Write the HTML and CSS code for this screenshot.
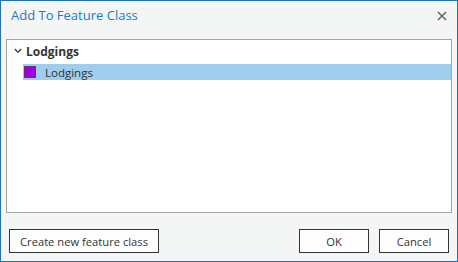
FILE: index.html
```html
<!DOCTYPE html>
<html>
<head>
<meta charset="utf-8">
<link rel="stylesheet" href="styles.css">
</head>
<body>
<div class="window">
  <div class="titlebar">
    <span class="title">Add To Feature Class</span>
    <span class="close" aria-label="Close">
      <svg width="10" height="10" viewBox="0 0 10 10"><path d="M1 1L9 9M9 1L1 9" stroke="#5f5f5f" stroke-width="1.4" fill="none"/></svg>
    </span>
  </div>
  <div class="listbox">
    <div class="group">
      <svg class="chevron" width="8" height="6" viewBox="0 0 8 6"><path d="M0.8 1L4 4.2L7.2 1" stroke="#444" stroke-width="1.5" fill="none"/></svg>
      <span class="group-label">Lodgings</span>
    </div>
    <div class="item selected">
      <span class="swatch"></span>
      <span class="item-label">Lodgings</span>
    </div>
  </div>
  <div class="footer">
    <button class="btn btn-wide">Create new feature class</button>
    <div class="spacer"></div>
    <button class="btn">OK</button>
    <button class="btn">Cancel</button>
  </div>
</div>
</body>
</html>
```

FILE: styles.css
```css
html, body {
  margin: 0;
  padding: 0;
  background: #f4f5f5;
}
body {
  font-family: "Open Sans", "Noto Sans", "Liberation Sans", sans-serif;
  color: #333;
}
.window {
  box-sizing: border-box;
  width: 458px;
  height: 262px;
  border: 1px solid #1a73c8;
  background: #f4f5f5;
  display: flex;
  flex-direction: column;
}
.titlebar {
  height: 38px;
  display: flex;
  align-items: flex-start;
  justify-content: space-between;
  box-sizing: border-box;
  padding: 4px 10px 0 10px;
}
.title {
  font-size: 13px;
  line-height: 20px;
  color: #2379c9;
}
.close {
  display: flex;
  margin-top: 6px;
}
.listbox {
  margin: 0 5px;
  height: 174px;
  box-sizing: border-box;
  border: 1px solid #a5a5a5;
  background: #fff;
  padding-top: 2px;
}
.group {
  display: flex;
  align-items: center;
  height: 18px;
  padding-left: 7px;
}
.chevron {
  margin-right: 4px;
}
.group-label {
  font-weight: bold;
  font-size: 12px;
  color: #333;
}
.item {
  display: flex;
  align-items: center;
  height: 16px;
  margin-top: 4px;
  margin-left: 16px;
  padding-left: 1px;
}
.item.selected {
  background: #9fcdee;
}
.swatch {
  width: 10px;
  height: 10px;
  background: #a000e0;
  border: 1px solid #70307c;
  margin-right: 9px;
}
.item-label {
  font-size: 11.5px;
  color: #333;
}
.footer {
  display: flex;
  align-items: center;
  padding: 16px 8px 0 8px;
  gap: 10px;
}
.spacer {
  flex: 1;
}
.btn {
  box-sizing: border-box;
  width: 70px;
  height: 24px;
  border: 1px solid #333;
  background: #fdfdfd;
  font-family: "Open Sans", "Noto Sans", "Liberation Sans", sans-serif;
  font-size: 11.2px;
  color: #333;
  padding: 0;
  margin: 0;
}
.btn-wide {
  width: 150px;
}
```
